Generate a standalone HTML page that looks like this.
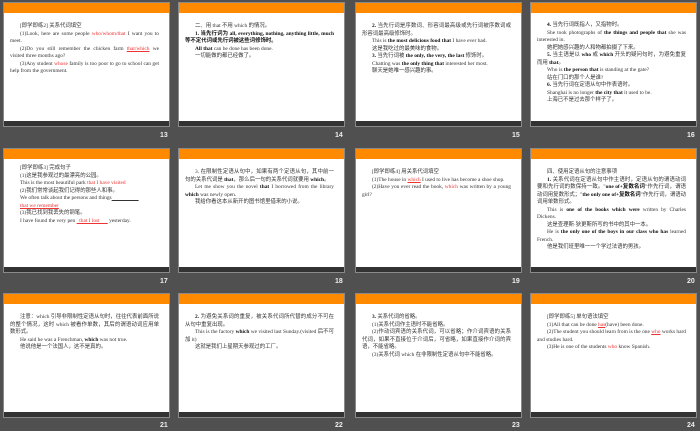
<!DOCTYPE html>
<html><head><meta charset="utf-8"><style>
*{margin:0;padding:0;box-sizing:border-box}
body{width:700px;height:431px;background:#505050;position:relative;overflow:hidden;font-family:"Liberation Serif","Noto Sans CJK SC",serif}
.s{position:absolute;width:167px;height:125px;background:#fff;border:1px solid #8a8a8a}
.s .o{position:absolute;left:0;top:0;right:0;height:10px;background:#ff8a00}
.s .d{position:absolute;left:0;bottom:0;right:0;height:5px;background:#333}
.s .t{position:absolute;left:6px;right:10px;top:20px;font-size:5.4px;line-height:7.5px;color:#333;text-align:justify}
.t p{text-indent:10px}
.r{color:#e33}
.n{position:absolute;color:#eee;font-size:7px;font-weight:bold;font-family:"Liberation Sans",sans-serif}
b{color:#111}
</style></head><body>
<div class="s" style="left:3px;top:2px"><div class="o"></div><div class="t">
<p>[即学即练2] 关系代词填空</p><p>(1)Look, here are some people <span class="r">who/whom/that</span> I want you to meet.</p><p>(2)Do you still remember the chicken farm <span class="r"><u>that/which</u></span> we visited three months ago?</p><p>(3)Any student <span class="r">whose</span> family is too poor to go to school can get help from the government.</p></div><div class="d"></div></div>
<div class="s" style="left:178px;top:2px"><div class="o"></div><div class="t">
<p>二、用 that 不用 which 的情况。</p><p><b>1. 当先行词为 all, everything, nothing, anything little, much 等不定代词或先行词被这些词修饰时。</b></p><p><b>All that</b> can be done has been done.</p><p>一切能做的都已经做了。</p></div><div class="d"></div></div>
<div class="s" style="left:355px;top:2px"><div class="o"></div><div class="t">
<p><b>2.</b> 当先行词是序数词、形容词最高级或先行词被序数词或形容词最高级修饰时。</p><p>This is <b>the most delicious food that</b> I have ever had.</p><p>这是我吃过的最美味的食物。</p><p><b>3.</b> 当先行词被 <b>the only, the very, the last</b> 修饰时。</p><p>Chatting was <b>the only thing that</b> interested her most.</p><p>聊天是她唯一感兴趣的事。</p></div><div class="d"></div></div>
<div class="s" style="left:530px;top:2px"><div class="o"></div><div class="t" style="top:19px">
<p><b>4.</b> 当先行词既指人，又指物时。</p><p>She took photographs of <b>the things and people that</b> she was interested in.</p><p>她把她感兴趣的人和物都拍摄了下来。</p><p><b>5.</b> 当主语是以 <b>who</b> 或 <b>which</b> 开头的疑问句时，为避免重复而用 <b>that</b>。</p><p>Who is <b>the person that</b> is standing at the gate?</p><p>站在门口的那个人是谁?</p><p><b>6.</b> 当先行词在定语从句中作表语时。</p><p>Shanghai is no longer <b>the city that</b> it used to be.</p><p>上海已不是过去那个样子了。</p></div><div class="d"></div></div>
<div class="n" style="left:160px;top:132px">13</div><div class="n" style="left:335px;top:132px">14</div><div class="n" style="left:512px;top:132px">15</div><div class="n" style="left:687px;top:132px">16</div>

<div class="s" style="left:3px;top:148px"><div class="o"></div><div class="t" style="top:16px">
<p>[即学即练3] 完成句子</p><p>(1)这是我参观过的最漂亮的公园。</p><p>This is the most beautiful park <span class="r">that I have visited</span></p><p>(2)我们常常谈起我们记得的那些人和事。</p><p>We often talk about the persons and things<u>&nbsp;&nbsp;&nbsp;&nbsp;&nbsp;&nbsp;&nbsp;&nbsp;&nbsp;&nbsp;&nbsp;&nbsp;&nbsp;&nbsp;&nbsp;&nbsp;&nbsp;&nbsp;&nbsp;&nbsp;</u></p><p><span class="r"><u>that we remember</u></span></p><p>(3)我已找到我丢失的钢笔。</p><p>I have found the very pen <span class="r"><u>&nbsp;&nbsp;that I lost&nbsp;&nbsp;&nbsp;&nbsp;&nbsp;&nbsp;</u></span> yesterday.</p></div><div class="d"></div></div>
<div class="s" style="left:178px;top:148px"><div class="o"></div><div class="t">
<p>3. 在限制性定语从句中，如果有两个定语从句，其中前一句的关系代词是 <b>that</b>，那么后一句的关系代词就要用 <b>which</b>。</p><p>Let me show you the novel <b>that</b> I borrowed from the library <b>which</b> was newly open.</p><p>我给你看这本从新开的图书馆里借来的小说。</p></div><div class="d"></div></div>
<div class="s" style="left:355px;top:148px"><div class="o"></div><div class="t">
<p>[即学即练4] 用关系代词填空</p><p>(1)The house in <span class="r"><u>which</u></span> I used to live has become a shoe shop.</p><p>(2)Have you ever read the book, <span class="r">which</span> was written by a young girl?</p></div><div class="d"></div></div>
<div class="s" style="left:530px;top:148px"><div class="o"></div><div class="t">
<p>四、使用定语从句的注意事项</p><p><b>1.</b> 关系代词在定语从句中作主语时，定语从句的谓语动词要和先行词的数保持一致。"<b>one of+复数名词</b>"作先行词，谓语动词用复数形式；"<b>the only one of+复数名词</b>"作先行词，谓语动词用单数形式。</p><p>This is <b>one of the books which were</b> written by Charles Dickens.</p><p>这是查理斯·狄更斯所写的书中的其中一本。</p><p>He is <b>the only one of the boys in our class who has</b> learned French.</p><p>他是我们班里唯一一个学过法语的男孩。</p></div><div class="d"></div></div>
<div class="n" style="left:160px;top:278px">17</div><div class="n" style="left:335px;top:278px">18</div><div class="n" style="left:512px;top:278px">19</div><div class="n" style="left:687px;top:278px">20</div>

<div class="s" style="left:3px;top:293px"><div class="o"></div><div class="t">
<p>注意：which 引导非限制性定语从句时，往往代表前面所说的整个情况，这时 which 被看作单数，其后的谓语动词应用单数形式。</p><p>He said he was a Frenchman, <b>which</b> was not true.</p><p>他说他是一个法国人，这不是真的。</p></div><div class="d"></div></div>
<div class="s" style="left:178px;top:293px"><div class="o"></div><div class="t">
<p><b>2.</b> 为避免关系词的重复，被关系代词所代替的成分不可在从句中重复出现。</p><p>This is the factory <b>which</b> we visited last Sunday.(visited 后不可加 it)</p><p>这就是我们上星期天参观过的工厂。</p></div><div class="d"></div></div>
<div class="s" style="left:355px;top:293px"><div class="o"></div><div class="t">
<p><b>3.</b> 关系代词的省略。</p><p>(1)关系代词作主语时不能省略。</p><p>(2)作动词宾语的关系代词，可以省略；作介词宾语的关系代词，如果不直接位于介词后，可省略，如果直接作介词的宾语，不能省略。</p><p>(3)关系代词 which 在非限制性定语从句中不能省略。</p></div><div class="d"></div></div>
<div class="s" style="left:530px;top:293px"><div class="o"></div><div class="t">
<p>[即学即练5] 单句语法填空</p><p>(1)All that can be done <span class="r"><u>has</u></span>(have) been done.</p><p>(2)The student you should learn from is the one <span class="r"><u>who</u></span> works hard and studies hard.</p><p>(3)He is one of the students <span class="r">who</span> know Spanish.</p></div><div class="d"></div></div>
<div class="n" style="left:160px;top:422px">21</div><div class="n" style="left:335px;top:422px">22</div><div class="n" style="left:512px;top:422px">23</div><div class="n" style="left:687px;top:422px">24</div>
</body></html>
